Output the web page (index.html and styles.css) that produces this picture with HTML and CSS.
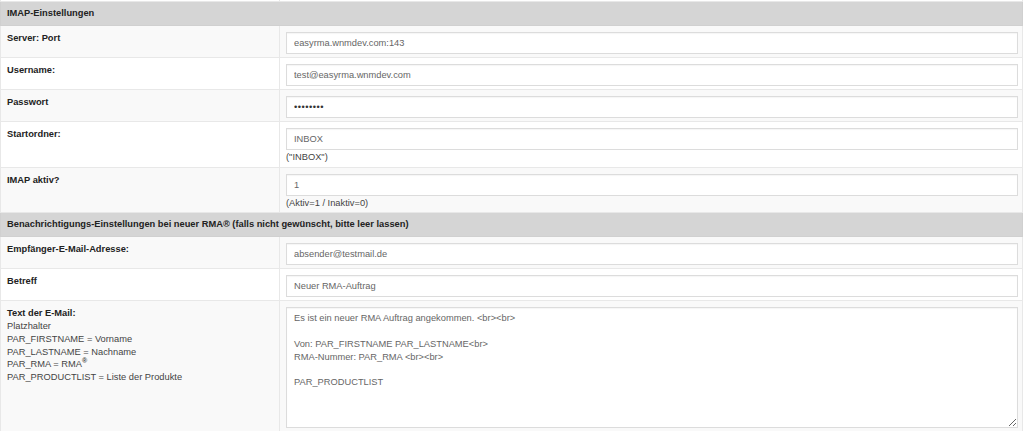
FILE: index.html
```html
<!DOCTYPE html>
<html lang="de">
<head>
    <meta charset="UTF-8">
    <meta name="viewport" content="width=device-width, initial-scale=1.0">
    <title>IMAP-Einstellungen</title>
    <link rel="stylesheet" href="styles.css">
</head>
<body>
    <table class="settings">
        <colgroup>
            <col class="col-label">
            <col>
        </colgroup>

        <!-- Ende der vorherigen Gruppe -->
        <tr class="cut"><td></td><td></td></tr>

        <tr class="section"><th colspan="2">IMAP-Einstellungen</th></tr>
        <tr class="odd">
            <td class="label">Server: Port</td>
            <td><input class="field" type="text" value="easyrma.wnmdev.com:143"></td>
        </tr>
        <tr>
            <td class="label">Username:</td>
            <td><input class="field" type="text" value="test@easyrma.wnmdev.com"></td>
        </tr>
        <tr class="odd">
            <td class="label">Passwort</td>
            <td><input class="field" type="password" value="geheim12"></td>
        </tr>
        <tr>
            <td class="label">Startordner:</td>
            <td>
                <input class="field" type="text" value="INBOX">
                <div class="hint">("INBOX")</div>
            </td>
        </tr>
        <tr class="odd">
            <td class="label">IMAP aktiv?</td>
            <td>
                <input class="field" type="text" value="1">
                <div class="hint">(Aktiv=1 / Inaktiv=0)</div>
            </td>
        </tr>

        <tr class="section"><th colspan="2">Benachrichtigungs-Einstellungen bei neuer RMA® (falls nicht gewünscht, bitte leer lassen)</th></tr>
        <tr class="odd">
            <td class="label">Empfänger-E-Mail-Adresse:</td>
            <td><input class="field" type="text" value="absender@testmail.de"></td>
        </tr>
        <tr>
            <td class="label">Betreff</td>
            <td><input class="field" type="text" value="Neuer RMA-Auftrag"></td>
        </tr>
        <tr class="odd">
            <td class="label">
                Text der E-Mail:
                <div class="placeholders">
                    Platzhalter<br>
                    PAR_FIRSTNAME = Vorname<br>
                    PAR_LASTNAME = Nachname<br>
                    PAR_RMA = RMA<sup>®</sup><br>
                    PAR_PRODUCTLIST = Liste der Produkte
                </div>
            </td>
            <td><textarea class="field mailtext">Es ist ein neuer RMA Auftrag angekommen. &lt;br&gt;&lt;br&gt;

Von: PAR_FIRSTNAME PAR_LASTNAME&lt;br&gt;
RMA-Nummer: PAR_RMA &lt;br&gt;&lt;br&gt;

PAR_PRODUCTLIST</textarea></td>
        </tr>
    </table>
</body>
</html>
```

FILE: styles.css
```css
body {
    margin: 0;
    background: #fff;
    font-family: "Liberation Sans", Arial, sans-serif;
    font-size: 9.3px;
    line-height: 12.8px;
    color: #222;
}
.settings {
    width: 1023px;
    border-collapse: collapse;
    table-layout: fixed;
}
.col-label {
    width: 279px;
}
.settings td,
.settings th {
    border: 1px solid #e8e8e8;
    vertical-align: top;
    text-align: left;
}
.settings td {
    padding: 6px 4px 3px 6px;
}
.cut td {
    height: 1px;
    padding: 0;
    border-top: none;
}
.section th {
    height: 12px;
    background: #d5d5d5;
    border-color: #d0d0d0;
    padding: 5px 6px 5px;
    font-weight: bold;
}
.odd td {
    background: #f9f9f9;
}
.label {
    font-weight: bold;
}
.placeholders {
    font-weight: normal;
    color: #444;
}
.placeholders sup {
    font-size: 7px;
    font-weight: bold;
    line-height: 0;
    vertical-align: 4px;
}
.field {
    display: block;
    box-sizing: border-box;
    width: 100%;
    height: 22px;
    margin: 0;
    padding: 0 7px;
    border: 1px solid #dcdcdc;
    border-radius: 0;
    box-shadow: inset 0 1px 1px rgba(0, 0, 0, 0.04);
    background: #fff;
    font-family: "Liberation Sans", Arial, sans-serif;
    font-size: 9.3px;
    color: #666;
    outline: none;
}
.field[type="password"] {
    color: #333;
    letter-spacing: 0.5px;
}
.hint {
    margin-top: 1px;
    color: #444;
}
.mailtext {
    height: 121px;
    padding: 4px 7px;
    line-height: 12.8px;
    resize: vertical;
}
```
